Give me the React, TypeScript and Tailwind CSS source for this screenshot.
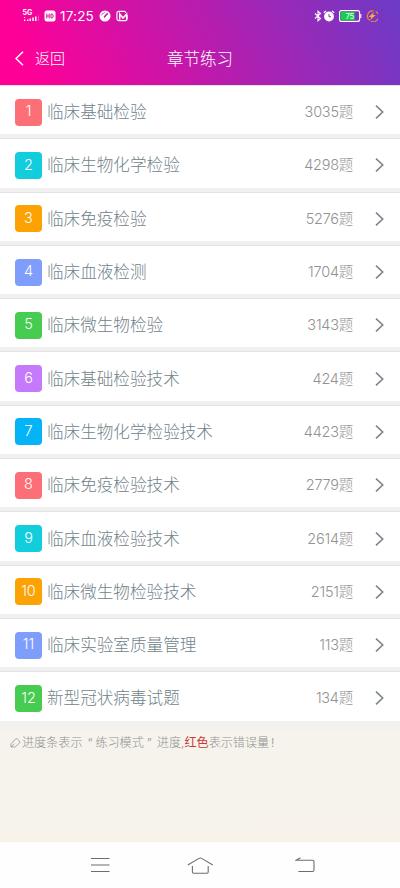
import React from 'react';

type Chapter = { title: string; count: number; color: string };

const chapters: Chapter[] = [
  { title: '临床基础检验', count: 3035, color: 'bg-[#fd6f77]' },
  { title: '临床生物化学检验', count: 4298, color: 'bg-[#12cddb]' },
  { title: '临床免疫检验', count: 5276, color: 'bg-[#fca203]' },
  { title: '临床血液检测', count: 1704, color: 'bg-[#7f9dfb]' },
  { title: '临床微生物检验', count: 3143, color: 'bg-[#46cc50]' },
  { title: '临床基础检验技术', count: 424, color: 'bg-[#c47afb]' },
  { title: '临床生物化学检验技术', count: 4423, color: 'bg-[#05b4f6]' },
  { title: '临床免疫检验技术', count: 2779, color: 'bg-[#fd6f77]' },
  { title: '临床血液检验技术', count: 2614, color: 'bg-[#12cddb]' },
  { title: '临床微生物检验技术', count: 2151, color: 'bg-[#fca203]' },
  { title: '临床实验室质量管理', count: 113, color: 'bg-[#7f9dfb]' },
  { title: '新型冠状病毒试题', count: 134, color: 'bg-[#46cc50]' },
];

const StatusBar: React.FC = () => (
  <div className="flex h-8 items-center justify-between pl-[22px] pr-[22px] text-white">
    <div className="flex items-center">
      <svg width="18" height="14" viewBox="0 0 18 14" fill="currentColor">
        <text x="0.5" y="6" fontSize="7" fontWeight="700" fontFamily="Inter, sans-serif">5G</text>
        <path d="M2 10.5h1.3V12H2zM2 8h1v1H2zM5 10.5h1.5V12H5zM7.5 9.5H9V12H7.5zM10.3 8.5h1.5v3.5h-1.5zM13 7.5h1.5V12H13z" />
        <path d="M16 6.5h1V12h-1z" opacity=".35" />
      </svg>
      <svg className="ml-[4px]" width="12" height="12" viewBox="0 0 12 12">
        <rect x="0.5" y="0.5" width="11" height="11" rx="2.5" fill="#fff" />
        <path d="M2.8 3.5v5M5.2 3.5v5M2.8 6h2.4M7 3.9v4.2h.7q1.5 0 1.5-2.1t-1.5-2.1z" fill="none" stroke="#d80ea2" strokeWidth="1" />
      </svg>
      <span className="ml-[4px] w-[35px] text-[13.5px] leading-4 tracking-[0.2px]">17:25</span>
      <svg className="ml-[4px]" width="12" height="12" viewBox="0 0 12 12">
        <circle cx="6" cy="6" r="5.5" fill="#fff" />
        <path d="M5.5 6.8 8.3 3.8" stroke="#c414a7" strokeWidth="1.6" strokeLinecap="round" />
        <path d="M2.6 5.3A3.6 3.6 0 0 1 5.8 2.6" fill="none" stroke="#c414a7" strokeWidth=".7" />
      </svg>
      <svg className="ml-[5px]" width="12" height="12" viewBox="0 0 13 12" fill="none" stroke="#fff">
        <path d="M10.5 2.7Q10.5 1 9 1H3Q1 1 1 3v6q0 2 2 2h7.5q1.5 0 1.5-2V5" strokeWidth="1.2" />
        <path d="M4 10V3.8l3.5 4.4L11.5 4v6" strokeWidth="1.6" />
      </svg>
    </div>
    <div className="flex items-center">
      <svg width="8" height="12" viewBox="0 0 8 12" fill="none" stroke="#fff" strokeWidth="1.1">
        <path d="m1 3.5 5.5 5L4 10.8V1.2l2.5 2.3-5.5 5" />
      </svg>
      <svg className="ml-[1px]" width="12" height="12" viewBox="0 0 12 12">
        <circle cx="6" cy="6.5" r="4.9" fill="#fff" />
        <path d="M.8 2.8 3 1M11.2 2.8 9 1" stroke="#fff" strokeWidth="1.3" />
        <path d="M6 4v2.8h2" fill="none" stroke="#9425b5" strokeWidth="1" />
      </svg>
      <svg className="ml-[4px]" width="23" height="12" viewBox="0 0 23 12">
        <rect x=".6" y=".6" width="20" height="10.8" rx="2" fill="none" stroke="#fff" strokeWidth="1.1" />
        <rect x="1.7" y="1.7" width="14" height="8.6" rx=".8" fill="#13cf4b" />
        <path d="M21.8 4v4" stroke="#fff" strokeWidth="1.1" />
        <text x="10.8" y="8.8" fontSize="7.6" fill="#fff" textAnchor="middle" fontFamily="Inter, sans-serif">75</text>
      </svg>
      <svg className="ml-[4px]" width="12" height="12" viewBox="0 0 12 12">
        <path d="M4 10.6A5.2 5.2 0 0 1 7.5 1M9.7 1.6A5.2 5.2 0 0 1 5 11.2" fill="none" stroke="#e58b49" strokeWidth="1.2" />
        <path d="M8.3 1.7 2.6 6.9h2.8L4.1 10.3l5.6-5.2H6.8z" fill="#ffad2f" />
      </svg>
    </div>
  </div>
);

const Header: React.FC = () => (
  <header className="h-[85px] shrink-0 bg-[linear-gradient(66deg,#ff0097_8%,#6c3bc6_100%)] text-white">
    <StatusBar />
    <div className="grid h-[53px] grid-cols-3 items-center">
      <div className="flex items-center pl-[15px]">
        <svg width="9" height="15" viewBox="0 0 9 15" fill="none" stroke="currentColor" strokeWidth="1.5">
          <path d="M8 .8 1 7.5l7 6.7" />
        </svg>
        <span className="ml-[11px] text-[15px] font-light leading-5">返回</span>
      </div>
      <h1 className="text-center text-[16.5px] font-light leading-5">章节练习</h1>
    </div>
  </header>
);

const ChapterRow: React.FC<{ chapter: Chapter; index: number }> = ({ chapter, index }) => (
  <li className="flex h-[49.3px] items-center border-t border-[#e3e3e3] bg-white pl-[15px] pr-[16px] pt-[4px]">
    <span className={`flex h-[27px] w-[27px] items-center justify-center rounded-[4px] pb-[2px] text-[14.5px] font-light text-white ${chapter.color}`}>
      {index}
    </span>
    <span className="ml-[5px] flex-1 text-[16.6px] font-light leading-6 text-[#71828a]">{chapter.title}</span>
    <span className="text-[14.5px] font-light leading-6 tracking-[-0.25px] text-[#929292]">{chapter.count}题</span>
    <svg className="ml-[22px]" width="9" height="14" viewBox="0 0 9 14" fill="none" stroke="#7b858b" strokeWidth="1.6">
      <path d="m1 .7 6.7 6.3L1 13.3" />
    </svg>
  </li>
);

const NavBar: React.FC = () => (
  <nav className="flex h-[46px] shrink-0 items-center bg-[#fefefe] pl-[90px] text-[#6d6d6d]">
    <svg width="20" height="16" viewBox="0 0 20 16" fill="none" stroke="currentColor" strokeWidth="1.1">
      <path d="M1 1.5h18.5M1 8h18.5M1 14.5h18.5" />
    </svg>
    <svg className="ml-[77px]" width="27" height="17" viewBox="0 0 27 17" fill="none" stroke="currentColor" strokeWidth="1.1" strokeLinejoin="round">
      <path d="M.8 8 12 1.4q1.3-.8 2.6 0L25.8 8M5.4 9v6q0 1.2 1.2 1.2H20q1.2 0 1.2-1.2V9" />
    </svg>
    <svg className="ml-[81px]" width="20" height="16" viewBox="0 0 20 16" fill="none" stroke="currentColor" strokeWidth="1.1">
      <path d="M5.5.8 1.2 3.2H17.5q1.5 0 1.5 1.5V13q0 1.5-1.5 1.5H3.4" />
    </svg>
  </nav>
);

export default function App() {
  return (
    <div className="flex h-[888px] w-[400px] flex-col overflow-hidden bg-[#f7f3ea] font-['Inter','Noto_Sans_CJK_SC',sans-serif]">
      <Header />
      <ul className="flex shrink-0 flex-col gap-[4px] bg-[#f0f0f0]">
        {chapters.map((c, i) => (
          <ChapterRow key={c.title} chapter={c} index={i + 1} />
        ))}
      </ul>
      <main className="flex-1 bg-[linear-gradient(#f0f0ef_0,#f5f3ec_12px,#f7f3eb_100%)] pl-[10px] pt-[13px]">
        <p className="flex items-center whitespace-nowrap text-[12.1px] font-light leading-[18px] text-[#929292]">
          <svg className="mr-[1px]" width="11" height="10" viewBox="0 0 11 10" fill="none" stroke="currentColor" strokeWidth=".8">
            <path d="M1 9V5.8L5.5 1q.9-.7 1.8 0l2.2 2.2q.8.8 0 1.7L5.8 8.5q-.5.5-1.2.5zl3.5-3.3" />
          </svg>
          <span>进度条表示</span>
          <span className="ml-[5px]">“</span>
          <span className="ml-[3px]">练习模式</span>
          <span className="ml-[3px] w-[10px]">”</span>
          <span>进度,</span>
          <span className="font-normal text-[#c83c38]">红色</span>
          <span>表示错误量</span>
          <span className="ml-[2px]">!</span>
        </p>
      </main>
      <NavBar />
    </div>
  );
}
